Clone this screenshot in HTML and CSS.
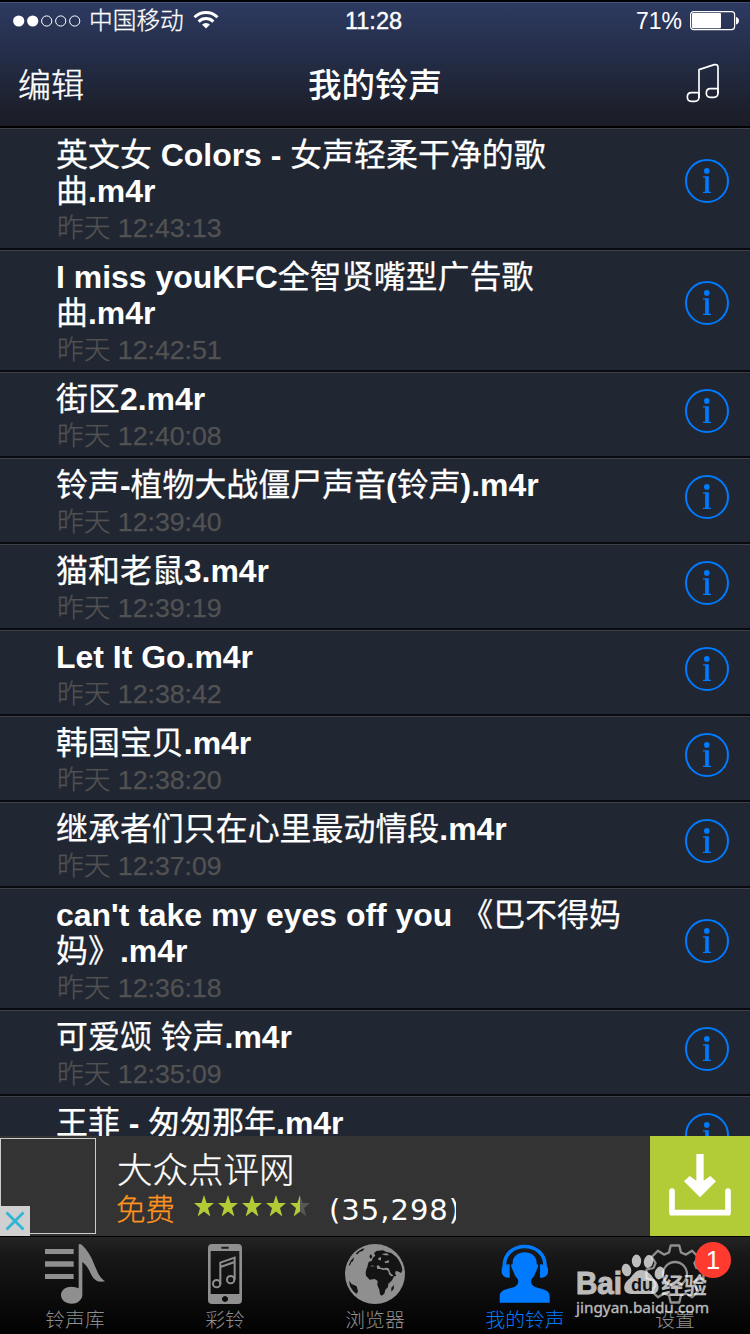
FILE: index.html
```html
<!DOCTYPE html>
<html lang="zh-CN">
<head>
<meta charset="utf-8">
<title>我的铃声</title>
<link rel="stylesheet" href="styles.css">
</head>
<body>
<svg class="defs" width="0" height="0">
  <symbol id="info" viewBox="0 0 44 44">
    <circle cx="22" cy="22" r="21" fill="none" stroke="#007aff" stroke-width="2"/>
    <circle cx="21.800" cy="11.900" r="2.800" fill="#007aff"/>
    <path d="M18 17.200h5.800v15.600h2.200v1.300h-8v-1.300h2.200V18.500H18z" fill="#007aff"/>
  </symbol>
  <symbol id="star" viewBox="0 0 20 22">
    <path d="M10 0l2.600 8.100H20l-6 4.900 2.400 8.600-6.400-5-6.400 5L6 13 0 8.100h7.400z"/>
  </symbol>
</svg>
<div class="screen">
  <header class="header">
    <div class="status">
      <div class="carrier">
        <svg class="signal" width="68" height="12" viewBox="0 0 68 12">
          <g fill="#fff"><circle cx="5.700" cy="6" r="5.600"/><circle cx="19.700" cy="6" r="5.600"/></g>
          <g fill="none" stroke="#fff"><circle cx="33.700" cy="6" r="5.100"/><circle cx="47.700" cy="6" r="5.100"/><circle cx="61.700" cy="6" r="5.100"/></g>
        </svg>
        <span class="operator">中国移动</span>
        <svg class="wifi" width="26" height="19" viewBox="0 0 26 19">
          <g fill="none" stroke="#fff" stroke-width="3"><path d="M1.500 7.200a16.300 16.300 0 0 1 23 0"/><path d="M5.600 11.600a10.500 10.500 0 0 1 14.800 0"/></g>
          <path d="M13 18.500l-4-4a5.800 5.800 0 0 1 8 0z" fill="#fff"/>
        </svg>
      </div>
      <div class="clock">11:28</div>
      <div class="power">
        <span>71%</span>
        <svg width="50" height="20" viewBox="0 0 50 20">
          <rect x=".6" y=".6" width="44" height="18" rx="3" fill="none" stroke="#fff" stroke-width="1.200"/>
          <rect x="2" y="2" width="29" height="15.200" rx="1" fill="#fff"/>
          <path d="M46 6c4 1 4 6.500 0 7.500z" fill="#fff"/>
        </svg>
      </div>
    </div>
    <div class="nav">
      <span class="edit">编辑</span>
      <h1 class="title">我的铃声</h1>
      <svg class="note" width="34" height="40" viewBox="256 186 102 120">
        <g fill="none" stroke="#fff" stroke-width="5" stroke-linejoin="round"><path d="M295 290V206l46-15q11-2 11 8v78"/><path d="M295 275h-23q-12 0-12 13t12 13h10q13 0 13-13z"/><path d="M352 263h-23q-12 0-12 13t12 13h10q13 0 13-13z"/></g>
      </svg>
    </div>
  </header>

  <main class="list">
    <div class="row tall"><div class="text"><p class="name">英文女 <b>Colors - </b>女声轻柔干净的歌<br>曲<b>.m4r</b></p><p class="time">昨天 12:43:13</p></div><svg class="info"><use href="#info"/></svg></div>
    <div class="row tall"><div class="text"><p class="name"><b>I miss youKFC</b>全智贤嘴型广告歌<br>曲<b>.m4r</b></p><p class="time">昨天 12:42:51</p></div><svg class="info"><use href="#info"/></svg></div>
    <div class="row"><div class="text"><p class="name">街区<b>2.m4r</b></p><p class="time">昨天 12:40:08</p></div><svg class="info"><use href="#info"/></svg></div>
    <div class="row"><div class="text"><p class="name">铃声<b>-</b>植物大战僵尸声音<b>(</b>铃声<b>).m4r</b></p><p class="time">昨天 12:39:40</p></div><svg class="info"><use href="#info"/></svg></div>
    <div class="row"><div class="text"><p class="name">猫和老鼠<b>3.m4r</b></p><p class="time">昨天 12:39:19</p></div><svg class="info"><use href="#info"/></svg></div>
    <div class="row"><div class="text"><p class="name"><b>Let It Go.m4r</b></p><p class="time">昨天 12:38:42</p></div><svg class="info"><use href="#info"/></svg></div>
    <div class="row"><div class="text"><p class="name">韩国宝贝<b>.m4r</b></p><p class="time">昨天 12:38:20</p></div><svg class="info"><use href="#info"/></svg></div>
    <div class="row"><div class="text"><p class="name">继承者们只在心里最动情段<b>.m4r</b></p><p class="time">昨天 12:37:09</p></div><svg class="info"><use href="#info"/></svg></div>
    <div class="row tall"><div class="text"><p class="name"><b>can't take my eyes off you </b>《巴不得妈<br>妈》<b>.m4r</b></p><p class="time">昨天 12:36:18</p></div><svg class="info"><use href="#info"/></svg></div>
    <div class="row"><div class="text"><p class="name">可爱颂 铃声<b>.m4r</b></p><p class="time">昨天 12:35:09</p></div><svg class="info"><use href="#info"/></svg></div>
    <div class="row"><div class="text"><p class="name">王菲 <b>- </b>匆匆那年<b>.m4r</b></p></div><svg class="info"><use href="#info"/></svg></div>
  </main>

  <aside class="ad">
    <div class="thumb">
      <svg class="close" width="30" height="30" viewBox="0 0 30 30"><rect width="30" height="30" fill="#d0d0d0"/><path d="M6.500 6.500l17 17M23.500 6.500l-17 17" stroke="#2fb5d2" stroke-width="2.800"/></svg>
    </div>
    <div class="ad-text">
      <div class="ad-name">大众点评网</div>
      <div class="ad-meta">
        <span class="free">免费</span>
        <span class="stars">
          <svg class="star"><use href="#star"/></svg><svg class="star"><use href="#star"/></svg><svg class="star"><use href="#star"/></svg><svg class="star"><use href="#star"/></svg><svg class="star" viewBox="0 0 20 22"><path fill="#575757" d="M10 0l2.600 8.100H20l-6 4.900 2.400 8.600-6.400-5z"/><path d="M10 0v16.600l-6.400 5L6 13 0 8.100h7.400z"/></svg>
        </span>
        <span class="count">(35,298)</span>
      </div>
    </div>
    <div class="download">
      <svg width="62" height="62" viewBox="147 162 186 186"><path d="M156 273v65h168v-65" fill="none" stroke="#fff" stroke-width="17" stroke-linejoin="round" stroke-linecap="round"/><path d="M229 162h22v80l20-14 17 16-48 48-48-48 17-16 20 14z" fill="#fff"/></svg>
    </div>
  </aside>

  <nav class="tabs">
    <div class="tab">
      <svg width="60" height="60" viewBox="135 432 180 180"><path d="M135 447h86v15h-86zM135 484h86v16h-86zM135 522h86v15h-86z"/><path d="M236 434q4-5 11 2c26 26 32 50 42 72q9 24 26 36c-30 7-39-14-46-30q-9-19-22-28v101c-3 14-15 24-32 24-18 0-32-11-32-26s14-25 32-25q12 0 21 5z"/></svg>
      <span>铃声库</span>
    </div>
    <div class="tab">
      <svg width="34" height="60" viewBox="114 342 102 180"><path fill-rule="evenodd" d="M126 342h78q12 0 12 12v156q0 12-12 12h-78q-12 0-12-12V354q0-12 12-12zM122 363v129h86V363zM154 350v6h22v-6zM165 498a9 9 0 1 0 .1 0z"/><g fill="none" stroke="#8f8f8f" stroke-width="6"><circle cx="140" cy="461" r="11"/><circle cx="182" cy="449" r="11"/><path d="M151 463v-65l43-15v66M151 411l43-15"/></g></svg>
      <span>彩铃</span>
    </div>
    <div class="tab">
      <svg width="60" height="60" viewBox="15 17 180 180"><circle cx="105" cy="107" r="90"/><g fill="#141414"><path d="M80 90l16-6 14 0 2 8 11 0 4 3 10-1 7 3 4 12 6 5 9-1-8 14-10 9-1 10-8 8-3 12-8 6-5-4-2-14-6-14 1-12-9-6-15 2-11-12-1-10z"/><path d="M86 71l10-4 2-8 8-7-4-7 7-7 20-2 10 5 15 3 15 12c10 12 17 26 18 40l-4 8-7-4-8-3-3 8 4 8-7 1-10-9-6-15-7-2-8 2-9-2-7-8-7 5-12-4-8 8-7-1z"/><path d="M27 127l8 10 15 7 4 15-4 8-10-8-10-15zM26 83c3-12 8-20 16-26l-3 12-5 2-3 8zM47 47c8-10 16-14 27-17l-6 8-9 2-6 8zM154 148l8-8-1 12-7 8zM88 54l5-7 4 8-5 7z"/></g><path d="M115 65l8 1 0-10-8 3zM125 47l15-2 8 6-14 0zM133 70l13-4 2 6-11 3z"/></svg>
      <span>浏览器</span>
    </div>
    <div class="tab active">
      <svg width="52" height="60" viewBox="178 43 156 180"><path d="M194 112C190 30 320 30 316 112" fill="none" stroke="#007aff" stroke-width="11"/><path d="M210 104v40q-18 2-24-14v-14q4-12 24-12zM301 104v40q18 2 24-14v-14q-4-12-24-12z"/><path d="M219 104c-4-48 76-48 72 0h3q3 2 0 10l-6 14q-3 12-12 20c-4 10-2 19 12 25 25 7 42 8 42 28v18H180v-18c0-20 17-22 42-28 14-6 16-15 12-25q-9-8-12-20l-6-14q-3-8 0-10z"/></svg>
      <span>我的铃声</span>
    </div>
    <div class="tab">
      <svg width="60" height="60" viewBox="-30 -30 60 60"><g fill="none" stroke="#8f8f8f" stroke-width="2.300" stroke-linejoin="round"><circle r="12"/><path d="M-6-21.500L-4.300-28.500H4.300L6-21.500 11-19.400 17.100-23.200 23.200-17.100 19.400-11 21.500-6 28.500-4.300V4.300L21.500 6 19.400 11 23.200 17.100 17.100 23.200 11 19.400 6 21.500 4.300 28.500H-4.300L-6 21.500-11 19.400-17.100 23.200-23.200 17.100-19.400 11-21.500 6-28.500 4.300V-4.300L-21.500-6-19.400-11-23.200-17.100-17.100-23.200-11-19.400z"/></g></svg>
      <span>设置</span>
      <div class="badge">1</div>
    </div>
    <svg class="watermark" width="140" height="80" viewBox="0 0 140 80">
      <g fill="#fff">
        <text class="wm-latin" x="5" y="45" textLength="46" lengthAdjust="spacingAndGlyphs">Bai</text>
        <ellipse cx="55.500" cy="21" rx="4.700" ry="6.300" transform="rotate(-12 55.500 21)"/><ellipse cx="65.500" cy="12" rx="4.700" ry="6.500"/><ellipse cx="77.500" cy="12.500" rx="4.700" ry="6.500" transform="rotate(10 77.500 12.500)"/><ellipse cx="88.500" cy="24" rx="4.700" ry="6.500" transform="rotate(15 88.500 24)"/>
        <path d="M70 21c6 0 10 4 13 9 7 6 6 15-3 15H60c-8 0-9-9-3-14 5-4 7-10 13-10z"/>
        <text class="wm-cn" x="90" y="45" textLength="46" lengthAdjust="spacingAndGlyphs">经验</text>
        <text class="wm-url" x="5" y="64" textLength="133" lengthAdjust="spacingAndGlyphs">jingyan.baidu.com</text>
      </g>
      <text class="wm-du" x="60" y="42" textLength="22" lengthAdjust="spacingAndGlyphs">du</text>
    </svg>
  </nav>
</div>
</body>
</html>
```
FILE: styles.css
```css
* { box-sizing: border-box; margin: 0; padding: 0; }
body { background: #000; color: #fff; font-family: "Liberation Sans", "Noto Sans CJK SC", sans-serif; }
svg { display: block; flex: none; }
.defs { position: absolute; }
.screen { width: 750px; height: 1334px; overflow: hidden; display: flex; flex-direction: column; }

.header { flex: none; height: 128px; border-top: 2px solid #000; border-bottom: 2px solid #000; background: linear-gradient(#2d3a61, #242d47 45%, #1c1f2a 90%, #1b1d27); box-shadow: inset 0 1px #46557c; }
.status { height: 38px; display: grid; grid-template-columns: 1fr 1fr 1fr; align-items: center; font-size: 24px; line-height: 38px; }
.carrier { display: flex; align-items: center; padding-left: 13px; }
.operator { margin-left: 8px; font-size: 23.700px; font-weight: 300; white-space: nowrap; -webkit-text-stroke: .3px #fff; }
.wifi { margin: -3px 0 0 9px; }
.clock { text-align: center; font-size: 23.500px; -webkit-text-stroke: .4px #fff; padding-right: 3px; }
.power { display: flex; align-items: center; justify-content: flex-end; gap: 8px; padding-right: 10px; font-size: 23px; }
.nav { height: 86px; padding: 6px 30px 0 18px; display: grid; grid-template-columns: 1fr 1fr 1fr; align-items: center; }
.edit { font-size: 33px; font-weight: 300; line-height: 48px; -webkit-text-stroke: .4px #fff; }
.title { font-size: 33.500px; font-weight: 500; line-height: 48px; text-align: center; padding-left: 12px; white-space: nowrap; }
.note { justify-self: end; margin-top: -7px; }

.list { flex: none; height: 1008px; overflow: hidden; background: #212732; }
.row { display: flex; align-items: flex-start; justify-content: space-between; padding: 8px 21px 0 56px; border-top: 1px solid #3d4045; border-bottom: 2px solid #090b10; }
.name { font-size: 31.950px; font-weight: 400; line-height: 36px; white-space: nowrap; -webkit-text-stroke: .25px #fff; }
.name b { -webkit-text-stroke: 0; }
.time { padding-left: 1px; font-size: 26.700px; font-weight: 300; line-height: 39px; color: #525252; -webkit-text-stroke: .25px #525252; }
.info { width: 44px; height: 44px; margin-top: 8px; }
.tall .info { margin-top: 22px; }

.ad { flex: none; height: 100px; display: flex; background: #333; }
.thumb { width: 96px; height: 96px; margin-top: 2px; border: 1px solid #ccc; position: relative; }
.close { position: absolute; left: -1px; bottom: -3px; }
.ad-text { flex: 1; padding-left: 21px; }
.ad-name { font-size: 35.500px; font-weight: 300; line-height: 48px; padding-top: 11px; height: 53px; -webkit-text-stroke: .3px #fff; }
.ad-meta { display: flex; height: 40px; }
.free { color: #ff9320; font-size: 29.500px; font-weight: 300; line-height: 42px; margin-left: -1px; -webkit-text-stroke: .3px #ff9320; }
.stars { display: flex; gap: 4px; margin: 6px 0 0 19px; }
.star { width: 20px; height: 22px; fill: #b2cc38; }
.count { margin-left: 19px; width: 127px; overflow: hidden; font: 29px/42px "DejaVu Sans", sans-serif; letter-spacing: 1px; white-space: nowrap; }
.download { width: 100px; display: flex; align-items: center; justify-content: center; background: #b2cc38; padding-bottom: 2px; }

.tabs { flex: none; height: 98px; position: relative; display: grid; grid-template-columns: repeat(5, 1fr); border-top: 1px solid #000; background: linear-gradient(#242424, #171717 20%, #030303 95%, #000); }
.tab { position: relative; display: flex; flex-direction: column; align-items: center; padding-top: 7px; color: #8f8f8f; fill: #8f8f8f; }
.tab span { font-size: 19.800px; font-weight: 300; line-height: 32px; }
.active { color: #007aff; fill: #007aff; }
.badge { position: absolute; left: 95px; top: 5px; width: 36px; height: 36px; border-radius: 50%; background: #ff3b30; color: #fff; text-align: center; font-size: 26px; line-height: 36px; z-index: 2; }
.watermark { position: absolute; left: 571px; top: 12px; opacity: .72; }
.wm-latin { font: bold 31px "Liberation Sans", sans-serif; stroke: #fff; stroke-width: 1px; }
.wm-cn { font: bold 23px "Noto Sans CJK SC", sans-serif; }
.wm-url { font: 15px "Noto Sans", sans-serif; stroke: #fff; stroke-width: .3px; }
.wm-du { font: bold 19px "Liberation Sans", sans-serif; fill: #151515; }
```
